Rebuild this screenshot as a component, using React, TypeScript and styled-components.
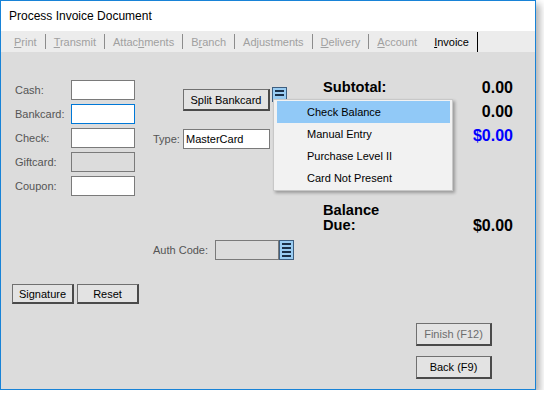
import React from 'react'
import styled, { createGlobalStyle } from 'styled-components'

const GlobalStyle = createGlobalStyle`
  body {
    margin: 0;
    background: #ffffff;
    font-family: 'Liberation Sans', Arial, sans-serif;
  }
`

// window frame
const Window = styled.div`
  width: 536px;
  height: 390px;
  box-sizing: border-box;
  border: 1px solid #1883d7;
  display: flex;
  flex-direction: column;
  background: #dcdcdc;
  box-shadow: 4px 4px 7px rgba(0, 0, 0, 0.3);
`

const TitleBar = styled.div`
  height: 30px;
  flex: none;
  background: #ffffff;
  display: flex;
  align-items: center;
  padding-left: 8px;
  font-size: 12px;
  color: #000000;
`

// tabs
const TabStrip = styled.div`
  height: 21px;
  flex: none;
  background: #ececec;
  display: flex;
  align-items: center;
  padding-left: 5px;
`

const Tab = styled.div<{ $active?: boolean }>`
  font-size: 11px;
  padding: 0 8px;
  color: ${(p) => (p.$active ? '#000000' : '#a0a0a0')};
  white-space: nowrap;
`

const TabSep = styled.div<{ $dark?: boolean; $hidden?: boolean }>`
  width: 1px;
  height: ${(p) => (p.$dark ? '20px' : '15px')};
  align-self: ${(p) => (p.$dark ? 'flex-end' : 'center')};
  background: ${(p) => (p.$hidden ? 'transparent' : p.$dark ? '#000000' : '#8c8c8c')};
`

// body
const Content = styled.div`
  flex: 1;
  display: flex;
  flex-direction: column;
  padding: 23px 0 0 14px;
`

const TopSection = styled.div`
  display: flex;
  align-items: flex-start;
`

const FieldGrid = styled.div`
  display: grid;
  grid-template-columns: 56px 64px;
  grid-auto-rows: 20px;
  row-gap: 4px;
  align-items: center;
  margin-top: 5px;
`

const Label = styled.span<{ $w?: number }>`
  font-size: 11px;
  color: #555555;
  white-space: nowrap;
  width: ${(p) => (p.$w ? p.$w + 'px' : 'auto')};
  flex: none;
`

type BoxState = 'normal' | 'focus' | 'disabled'
const TextBox = styled.input<{ $w: number; $state?: BoxState }>`
  width: ${(p) => p.$w}px;
  height: 20px;
  box-sizing: border-box;
  margin: 0;
  padding: 0 2px;
  outline: none;
  font-family: 'Liberation Sans', Arial, sans-serif;
  font-size: 11px;
  color: #000000;
  border: 1px solid ${(p) => (p.$state === 'focus' ? '#0078d7' : '#7a7a7a')};
  background: ${(p) => (p.$state === 'disabled' ? '#dcdcdc' : '#ffffff')};
`

const MiddleCol = styled.div`
  margin-left: 18px;
  margin-top: 12px;
  display: flex;
  flex-direction: column;
`

const SplitRow = styled.div`
  display: flex;
  align-items: flex-start;
  padding-left: 30px;
`

const FieldRow = styled.div<{ $top: number }>`
  display: flex;
  align-items: center;
  margin-top: ${(p) => p.$top}px;
`

const PushButton = styled.button<{ $w: number; $h?: number; $disabled?: boolean }>`
  width: ${(p) => p.$w}px;
  height: ${(p) => p.$h ?? 20}px;
  box-sizing: border-box;
  margin: 0;
  padding: 0;
  background: #e3e3e3;
  border-style: solid;
  border-width: 1px 2px 2px 1px;
  border-color: #707070 #4a4a4a #4a4a4a #707070;
  font-family: 'Liberation Sans', Arial, sans-serif;
  font-size: 11px;
  color: ${(p) => (p.$disabled ? '#6d6d6d' : '#000000')};
  flex: none;
`

const SplitButton = styled(PushButton)`
  margin-top: 2px;
`

const IconHolder = styled.div`
  position: relative;
  margin-left: 2px;
  display: flex;
`

const Menu = styled.div`
  position: absolute;
  left: 1px;
  top: 12px;
  z-index: 5;
  width: 180px;
  height: 92px;
  box-sizing: border-box;
  padding-top: 1px;
  background: #f2f2f2;
  border: 1px solid #c8c8c8;
  box-shadow: 2px 2px 3px rgba(0, 0, 0, 0.3);
`

const MenuItem = styled.div<{ $active?: boolean }>`
  height: 22px;
  margin: 0 2px 0 3px;
  padding-left: 30px;
  display: flex;
  align-items: center;
  font-size: 11px;
  color: #000000;
  background: ${(p) => (p.$active ? '#91c9f7' : 'transparent')};
`

const RightCol = styled.div`
  margin-left: 29px;
  width: 190px;
  display: flex;
  flex-direction: column;
`

const TotalRow = styled.div`
  height: 24px;
  display: flex;
  justify-content: space-between;
  align-items: center;
`

const TotalLabel = styled.div`
  font-size: 14.67px;
  font-weight: bold;
  line-height: 15px;
  color: #000000;
`

const TotalValue = styled.div<{ $blue?: boolean }>`
  font-size: 16px;
  font-weight: bold;
  line-height: 15px;
  color: ${(p) => (p.$blue ? '#0000ff' : '#000000')};
`

const BalanceRow = styled.div`
  margin-top: 56px;
  display: flex;
  justify-content: space-between;
  align-items: flex-end;
`

const ButtonRow = styled.div`
  display: flex;
  gap: 3px;
  margin-top: 24px;
  margin-left: -3px;
`

const NavButtons = styled.div`
  align-self: flex-end;
  margin-right: 43px;
  margin-top: 19px;
  display: flex;
  flex-direction: column;
  gap: 10px;
`

const ListIcon: React.FC<{ h: number; bars: number[] }> = ({ h, bars }) => (
  <svg width={15} height={h} viewBox={`0 0 15 ${h}`}>
    <rect x={0.5} y={0.5} width={14} height={h - 1} fill="#99ccf2" stroke="#3d5e80" />
    {bars.map((y) => (
      <rect key={y} x={3} y={y} width={9} height={2} fill="#1a2f48" />
    ))}
  </svg>
)

const tabs: { key: string; pre: string; u: string; post: string; sep: 'grey' | 'none' | 'dark' }[] = [
  { key: 'p', pre: '', u: 'P', post: 'rint', sep: 'grey' },
  { key: 't', pre: '', u: 'T', post: 'ransmit', sep: 'grey' },
  { key: 'a', pre: 'Attac', u: 'h', post: 'ments', sep: 'grey' },
  { key: 'b', pre: 'B', u: 'r', post: 'anch', sep: 'grey' },
  { key: 'j', pre: 'Ad', u: 'j', post: 'ustments', sep: 'grey' },
  { key: 'd', pre: '', u: 'D', post: 'elivery', sep: 'grey' },
  { key: 'c', pre: '', u: 'A', post: 'ccount', sep: 'none' },
  { key: 'i', pre: '', u: 'I', post: 'nvoice', sep: 'dark' },
]

const fields: { label: string; state: BoxState }[] = [
  { label: 'Cash:', state: 'normal' },
  { label: 'Bankcard:', state: 'focus' },
  { label: 'Check:', state: 'normal' },
  { label: 'Giftcard:', state: 'disabled' },
  { label: 'Coupon:', state: 'normal' },
]

const menuItems = ['Check Balance', 'Manual Entry', 'Purchase Level II', 'Card Not Present']

export default function App() {
  return (
    <>
      <GlobalStyle />
      <Window>
        <TitleBar>Process Invoice Document</TitleBar>
        <TabStrip>
          {tabs.map((t) => (
            <React.Fragment key={t.key}>
              <Tab $active={t.key === 'i'}>
                {t.pre}
                <u>{t.u}</u>
                {t.post}
              </Tab>
              <TabSep $dark={t.sep === 'dark'} $hidden={t.sep === 'none'} />
            </React.Fragment>
          ))}
        </TabStrip>
        <Content>
          <TopSection>
            <FieldGrid>
              {fields.map((f) => (
                <React.Fragment key={f.label}>
                  <Label>{f.label}</Label>
                  <TextBox $w={64} $state={f.state} disabled={f.state === 'disabled'} readOnly />
                </React.Fragment>
              ))}
            </FieldGrid>
            <MiddleCol>
              <SplitRow>
                <SplitButton $w={87} $h={22}>
                  Split Bankcard
                </SplitButton>
                <IconHolder>
                  <ListIcon h={15} bars={[3, 7]} />
                  <Menu>
                    {menuItems.map((m, i) => (
                      <MenuItem key={m} $active={i === 0}>
                        {m}
                      </MenuItem>
                    ))}
                  </Menu>
                </IconHolder>
              </SplitRow>
              <FieldRow $top={18}>
                <Label $w={30}>Type:</Label>
                <TextBox $w={87} defaultValue="MasterCard" readOnly />
              </FieldRow>
              <FieldRow $top={91}>
                <Label $w={62}>Auth Code:</Label>
                <TextBox $w={64} $state="disabled" disabled />
                <ListIcon h={20} bars={[3, 7, 11, 15]} />
              </FieldRow>
            </MiddleCol>
            <RightCol>
              <TotalRow>
                <TotalLabel>Subtotal:</TotalLabel>
                <TotalValue>0.00</TotalValue>
              </TotalRow>
              <TotalRow>
                <TotalLabel />
                <TotalValue>0.00</TotalValue>
              </TotalRow>
              <TotalRow>
                <TotalLabel />
                <TotalValue $blue>$0.00</TotalValue>
              </TotalRow>
              <BalanceRow>
                <TotalLabel>
                  Balance
                  <br />
                  Due:
                </TotalLabel>
                <TotalValue>$0.00</TotalValue>
              </BalanceRow>
            </RightCol>
          </TopSection>
          <ButtonRow>
            <PushButton $w={62}>Signature</PushButton>
            <PushButton $w={62}>Reset</PushButton>
          </ButtonRow>
          <NavButtons>
            <PushButton $w={76} $h={23} $disabled>
              Finish (F12)
            </PushButton>
            <PushButton $w={76} $h={23}>
              Back (F9)
            </PushButton>
          </NavButtons>
        </Content>
      </Window>
    </>
  )
}
